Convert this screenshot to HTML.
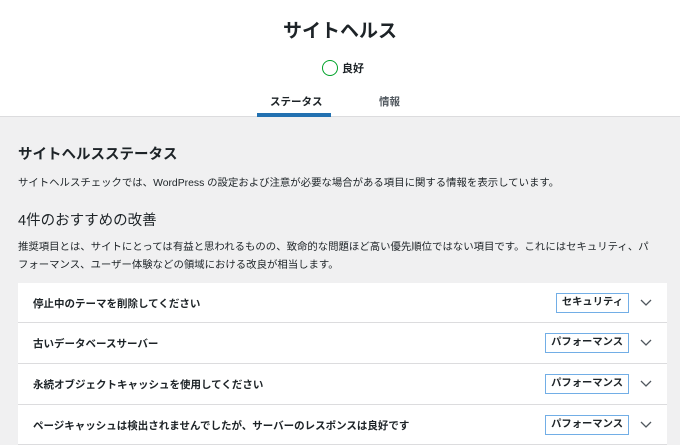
<!DOCTYPE html><html><head><meta charset="utf-8"><style>
body{margin:0;width:680px;height:445px;overflow:hidden;background:#f0f0f1;font-family:"Liberation Sans","Noto Sans CJK JP",sans-serif;color:#1d2327}
.hd{background:#fff;height:117px;border-bottom:1px solid #dcdcde;position:relative;box-sizing:border-box}
h1{margin:0;position:absolute;top:16px;width:100%;text-align:center;font-size:19px;font-weight:700}
.st{position:absolute;top:60px;left:322px;font-size:11px;font-weight:600;display:flex;align-items:center}
.st i{width:14px;height:14px;border:1.5px solid #00a32a;border-radius:50%;margin-right:4px;display:inline-block}
.tab{position:absolute;top:94px;font-size:10.5px;font-weight:600}
.ul{position:absolute;left:257px;top:113px;width:74px;height:4px;background:#2271b1}
h2{position:absolute;left:18px;top:143px;margin:0;font-size:14.5px;font-weight:700}
.p{position:absolute;left:18px;font-size:10.4px;line-height:18px;width:643px}
h3{position:absolute;left:18px;top:209px;margin:0;font-size:14.5px;font-weight:400}
.row{position:absolute;left:18px;width:649px;height:40px;background:#fff;border-bottom:1px solid #dcdcde;font-size:10.5px;font-weight:600;box-sizing:border-box}
.row span{position:absolute;left:15px;top:13px}
.row b{position:absolute;right:38px;top:10px;border:1px solid #72aee6;padding:1px 5px;font-size:10.3px;font-weight:600;line-height:16px}
.row svg{position:absolute;right:15px;top:16px}
</style></head><body>
<div class="hd"><h1>サイトヘルス</h1><div class="st"><i></i>良好</div>
<div class="tab" style="left:270px">ステータス</div><div class="tab" style="left:379px;color:#50575e">情報</div><div class="ul"></div></div>
<h2>サイトヘルスステータス</h2>
<div class="p" style="top:175px">サイトヘルスチェックでは、WordPress の設定および注意が必要な場合がある項目に関する情報を表示しています。</div>
<h3>4件のおすすめの改善</h3>
<div class="p" style="top:239px">推奨項目とは、サイトにとっては有益と思われるものの、致命的な問題ほど高い優先順位ではない項目です。これにはセキュリティ、パ<br>フォーマンス、ユーザー体験などの領域における改良が相当します。</div>
<div class="row" style="top:283px"><span>停止中のテーマを削除してください</span><b>セキュリティ</b><svg width="12" height="8"><path d="M1 1l5 5 5-5" fill="none" stroke="#50575e" stroke-width="1.3"/></svg></div>
<div class="row" style="top:323px;height:41px"><span>古いデータベースサーバー</span><b>パフォーマンス</b><svg width="12" height="8"><path d="M1 1l5 5 5-5" fill="none" stroke="#50575e" stroke-width="1.3"/></svg></div>
<div class="row" style="top:364px;height:41px"><span>永続オブジェクトキャッシュを使用してください</span><b>パフォーマンス</b><svg width="12" height="8"><path d="M1 1l5 5 5-5" fill="none" stroke="#50575e" stroke-width="1.3"/></svg></div>
<div class="row" style="top:405px"><span>ページキャッシュは検出されませんでしたが、サーバーのレスポンスは良好です</span><b>パフォーマンス</b><svg width="12" height="8"><path d="M1 1l5 5 5-5" fill="none" stroke="#50575e" stroke-width="1.3"/></svg></div>
</body></html>
